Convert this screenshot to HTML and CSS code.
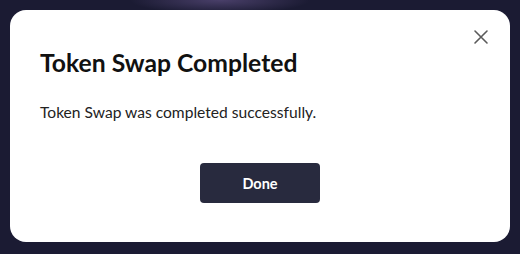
FILE: index.html
```html
<!DOCTYPE html>
<html lang="en">
<head>
<meta charset="utf-8">
<title>Token Swap Completed</title>
<link rel="stylesheet" href="styles.css">
</head>
<body>
<div class="backdrop">
  <div class="modal">
    <button class="close" aria-label="Close">
      <svg width="16" height="16" viewBox="0 0 16 16"><path d="M2 2 L14 14 M14 2 L2 14" stroke="#5a5a5a" stroke-width="1.6" stroke-linecap="round" fill="none"/></svg>
    </button>
    <h1 class="title">Token Swap Completed</h1>
    <p class="message">Token Swap was completed successfully.</p>
    <div class="actions">
      <button class="done">Done</button>
    </div>
  </div>
</div>
</body>
</html>
```
FILE: styles.css
```css
html, body {
  margin: 0;
  padding: 0;
  height: 100%;
}
body {
  background: #1b1b33;
  font-family: "Lato", "Noto Sans", sans-serif;
}
.backdrop {
  height: 100%;
  box-sizing: border-box;
  padding: 10px 10px 12px 10px;
  background: radial-gradient(ellipse 90px 14px at 220px 0px, rgba(120, 100, 160, 0.5), rgba(27, 27, 51, 0) 100%), #1b1b33;
}
.modal {
  position: relative;
  background: #ffffff;
  border-radius: 16px;
  width: 500px;
  height: 232px;
  box-sizing: border-box;
  padding: 38px 30px 0 30px;
}
.close {
  position: absolute;
  top: 16px;
  right: 18px;
  width: 22px;
  height: 22px;
  padding: 0;
  border: none;
  background: transparent;
  display: flex;
  align-items: center;
  justify-content: center;
}
.title {
  margin: 0;
  font-size: 24.7px;
  line-height: 30px;
  font-weight: 700;
  color: #111111;
}
.message {
  margin: 24px 0 0 0;
  font-size: 15.6px;
  line-height: 20px;
  color: #222222;
}
.actions {
  margin-top: 41px;
  display: flex;
  justify-content: center;
}
.done {
  width: 120px;
  height: 40px;
  border: none;
  border-radius: 4px;
  background: #282a3e;
  color: #ffffff;
  font-family: "Lato", "Noto Sans", sans-serif;
  font-size: 14.5px;
  font-weight: 700;
}
```
